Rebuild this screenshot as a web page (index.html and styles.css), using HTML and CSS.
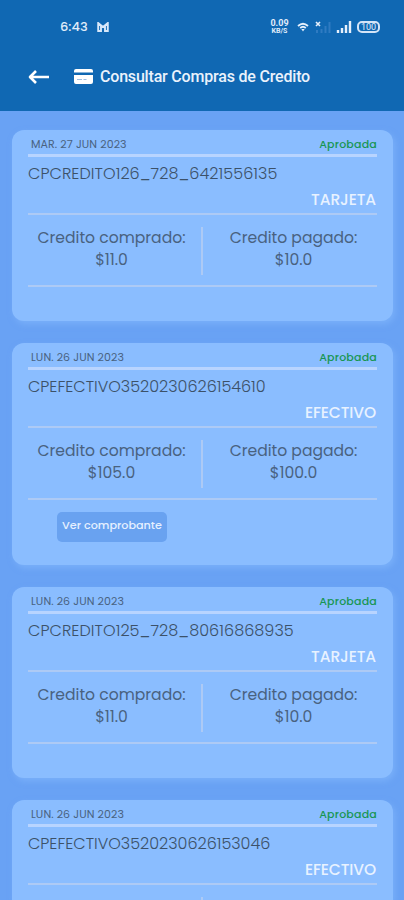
FILE: index.html
```html
<!DOCTYPE html>
<html lang="es">
<head>
    <meta charset="UTF-8">
    <meta name="viewport" content="width=device-width, initial-scale=1.0">
    <title>Consultar Compras de Credito</title>
    <link rel="stylesheet" href="styles.css">
</head>
<body>
    <header>
        <div class="status-bar">
            <span class="clock">6:43</span>
            <svg class="mail" width="12" height="10" viewBox="0 0 12 10"><path d="M1.2 10V1L6 5l4.800-4v9M4 3v7M8 3v7M1 9h3M8 9h3" fill="none" stroke="#d8e8fa" stroke-width="1.900"/></svg>
            <div class="speed"><span>0.09</span><span class="unit">KB/S</span></div>
            <svg class="wifi" width="12" height="10" viewBox="0 0 12 10"><path d="M1 4Q6-.5 11 4M3.200 6Q6 3.500 8.800 6" fill="none" stroke="#e6f0fc" stroke-width="1.800"/><path d="M4.300 7h3.400L6 9.500z" fill="#e6f0fc"/></svg>
            <svg class="no-signal" width="16" height="12" viewBox="0 0 16 12"><path d="M1 1l4 4M5 1L1 5" stroke="#e6f0fc" stroke-width="1.600"/><path d="M2 9v3M6.500 8v4M10.500 5v7M14.500 1v11" stroke="#2f7bc2" stroke-width="2"/></svg>
            <svg class="signal" width="16" height="12" viewBox="0 0 16 12"><path d="M2 9v3M6 7v5M10 4v8M14 0v12" stroke="#e6f0fc" stroke-width="2.400"/></svg>
            <div class="battery">100</div>
        </div>
        <div class="title-bar">
            <svg class="back" width="22" height="14" viewBox="0 0 22 14"><path d="M21 7H2M8 1L2 7l6 6" fill="none" stroke="#fff" stroke-width="2.600" stroke-linejoin="round"/></svg>
            <svg class="card-icon" width="19" height="15" viewBox="0 0 19 15"><path d="M2 0h15a2 2 0 0 1 2 2v1.500H0V2a2 2 0 0 1 2-2zM0 6h19v7a2 2 0 0 1-2 2H2a2 2 0 0 1-2-2z" fill="#fff"/><path d="M3 10.500h5M9.500 10.500h3" stroke="#9dbfe3" stroke-width="1"/></svg>
            <h1>Consultar Compras de Credito</h1>
        </div>
    </header>

    <main>
        <section class="card">
            <div class="card-top">
                <span class="date">MAR. 27 JUN 2023</span>
                <span class="estado">Aprobada</span>
            </div>
            <p class="folio folio-largo">CPCREDITO126_728_6421556135</p>
            <p class="tipo">TARJETA</p>
            <div class="montos">
                <div class="monto"><span>Credito comprado:</span><span>$11.0</span></div>
                <div class="monto"><span>Credito pagado:</span><span>$10.0</span></div>
            </div>
        </section>

        <section class="card card-efectivo">
            <div class="card-top">
                <span class="date">LUN. 26 JUN 2023</span>
                <span class="estado">Aprobada</span>
            </div>
            <p class="folio">CPEFECTIVO3520230626154610</p>
            <p class="tipo">EFECTIVO</p>
            <div class="montos">
                <div class="monto"><span>Credito comprado:</span><span>$105.0</span></div>
                <div class="monto"><span>Credito pagado:</span><span>$100.0</span></div>
            </div>
            <button class="comprobante">Ver comprobante</button>
        </section>

        <section class="card">
            <div class="card-top">
                <span class="date">LUN. 26 JUN 2023</span>
                <span class="estado">Aprobada</span>
            </div>
            <p class="folio folio-largo">CPCREDITO125_728_80616868935</p>
            <p class="tipo">TARJETA</p>
            <div class="montos">
                <div class="monto"><span>Credito comprado:</span><span>$11.0</span></div>
                <div class="monto"><span>Credito pagado:</span><span>$10.0</span></div>
            </div>
        </section>

        <section class="card card-cortada">
            <div class="card-top">
                <span class="date">LUN. 26 JUN 2023</span>
                <span class="estado">Aprobada</span>
            </div>
            <p class="folio">CPEFECTIVO3520230626153046</p>
            <p class="tipo">EFECTIVO</p>
            <div class="montos">
                <div class="monto"></div>
                <div class="monto"></div>
            </div>
        </section>
    </main>
</body>
</html>
```
FILE: styles.css
```css
body {
    font-family: Poppins, Inter, sans-serif;
    margin: 0;
    height: 900px;
    overflow: hidden;
    background-color: #69a2f4;
    color: #49627f;
}

/* Encabezado */
header {
    height: 111px;
    background-color: #1068b3;
    color: #eaf2fc;
}

.status-bar {
    display: flex;
    align-items: center;
    height: 53px;
    padding: 0 24px 0 60px;
    box-sizing: border-box;
    color: #e0ecfa;
}

.clock {
    width: 37px;
    font-size: 13px;
    font-weight: 500;
}

.speed {
    display: flex;
    flex-direction: column;
    width: 21px;
    margin-left: auto;
    margin-right: 7px;
    font-family: Roboto, sans-serif;
    font-size: 9px;
    font-weight: 700;
    line-height: 9px;
    text-align: center;
}

.unit {
    font-size: 7px;
    line-height: 7px;
}

.wifi {
    margin-right: 6px;
}

.no-signal {
    margin-right: 5px;
}

.signal {
    margin-right: 5px;
}

.battery {
    width: 23px;
    height: 12px;
    box-sizing: border-box;
    border: 2px solid #d4e4f7;
    border-radius: 5px;
    font-family: Roboto, sans-serif;
    font-size: 9px;
    line-height: 9px;
    text-align: center;
}

.title-bar {
    display: flex;
    align-items: center;
    height: 48px;
    padding-left: 28px;
}

.back {
    margin-right: 24px;
}

.card-icon {
    margin-top: -2px;
}

h1 {
    margin: -1px 0 0 7px;
    font-family: Roboto, sans-serif;
    font-size: 16px;
    font-weight: 500;
    letter-spacing: -0.19px;
}

/* Tarjetas de compras */
main {
    display: flex;
    flex-direction: column;
    gap: 22px;
    padding: 19px 11px 0 12px;
}

.card {
    height: 191px;
    padding: 0 16px;
    box-sizing: border-box;
    border-radius: 12px;
    background-color: #8abdff;
    box-shadow: 2px 3px 6px rgba(138, 189, 255, 0.5);
}

.card-efectivo {
    height: 222px;
}

/* La ultima tarjeta queda cortada por la pantalla */
.card-cortada {
    height: 100px;
    border-radius: 12px 12px 0 0;
    overflow: hidden;
}

.card-top {
    display: flex;
    justify-content: space-between;
    height: 27px;
    padding-left: 3px;
    box-sizing: border-box;
    border-bottom: 3px solid #b8d4ff;
    font-size: 11px;
    line-height: 28px;
    white-space: nowrap;
}

.date {
    letter-spacing: 0.1px;
}

.estado {
    color: #189653;
    font-weight: 500;
    letter-spacing: 0.2px;
}

.folio {
    margin: 0;
    font-size: 16px;
    font-weight: 300;
    line-height: 33px;
    white-space: nowrap;
    color: #3c5168;
}

.folio-largo {
    letter-spacing: 0.07px;
}

.tipo {
    margin: 0;
    height: 23px;
    padding-right: 1px;
    border-bottom: 2px solid #adcaf5;
    color: #e8f2ff;
    font-size: 15.5px;
    font-weight: 500;
    letter-spacing: -0.12px;
    line-height: 20px;
    text-align: right;
}

.montos {
    display: flex;
    height: 70px;
    border-bottom: 2px solid #adcaf5;
}

.monto {
    display: flex;
    flex: 1;
    flex-direction: column;
    align-items: center;
    height: 48px;
    margin-top: 12px;
    padding-right: 6px;
    font-size: 15.6px;
    line-height: 22px;
    white-space: nowrap;
}

.monto + .monto {
    padding: 0 0 0 7px;
    border-left: 2px solid #adcaf5;
}

.comprobante {
    display: block;
    width: 110px;
    height: 30px;
    margin: 12px 0 0 29px;
    padding: 0 0 3px;
    border: none;
    border-radius: 5px;
    background-color: #69a2f0;
    color: #e5f0ff;
    font-family: inherit;
    font-size: 11.2px;
    font-weight: 500;
}
```
